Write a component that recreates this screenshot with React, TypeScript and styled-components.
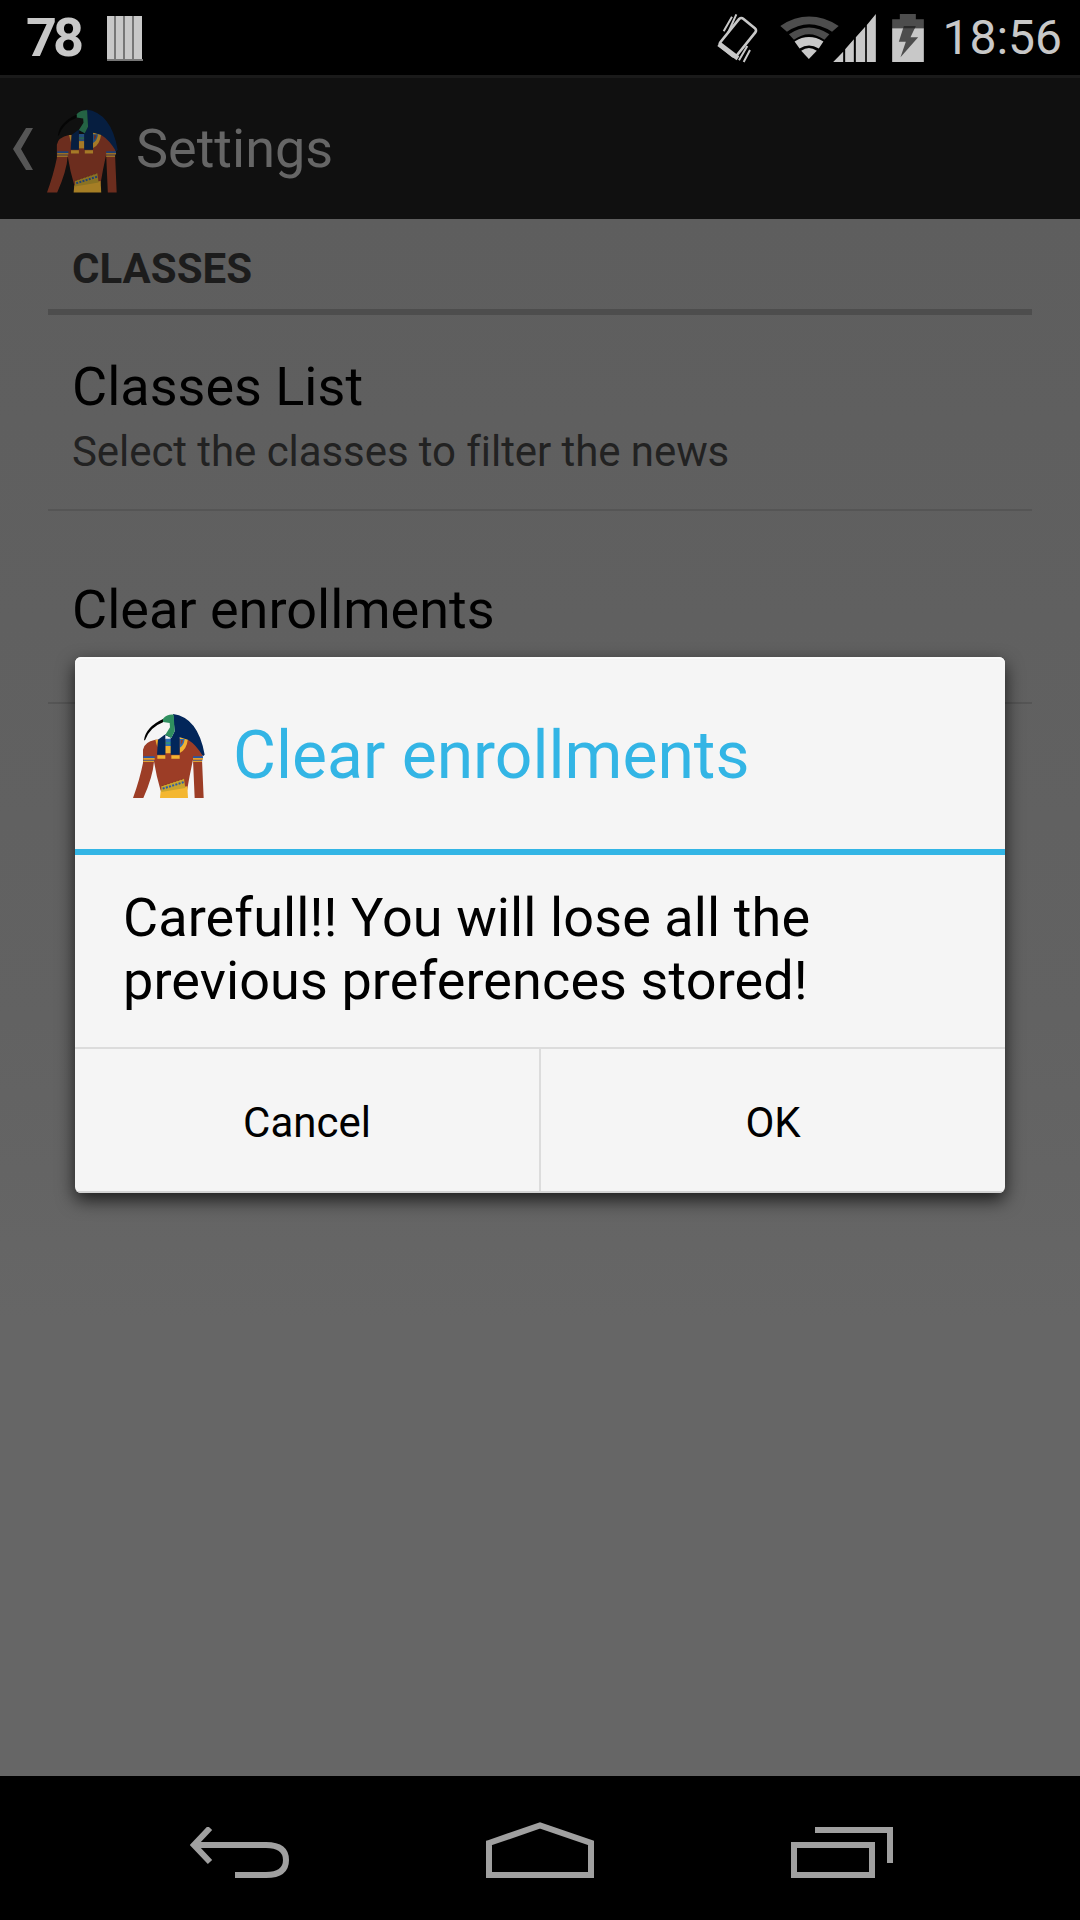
import React from 'react';
import styled, { createGlobalStyle } from 'styled-components';

const GlobalStyle = createGlobalStyle`
  html, body {
    margin: 0;
    padding: 0;
    background: #000;
  }
  * {
    box-sizing: border-box;
  }
`;

const Screen = styled.div`
  position: relative;
  width: 1080px;
  height: 1920px;
  display: flex;
  flex-direction: column;
  overflow: hidden;
  font-family: Roboto, "Noto Sans", sans-serif;
  background: #666;
`;

const StatusBar = styled.div`
  height: 75px;
  flex: none;
  background: #000;
  display: flex;
  align-items: center;
  padding: 0 18px 0 26px;
  color: #c8c8c8;
`;

const BatteryPercent = styled.span`
  font-size: 54px;
  font-weight: 700;
  letter-spacing: -4px;
  line-height: 75px;
`;

const Clock = styled.span`
  font-size: 48px;
  line-height: 75px;
  margin-left: 18px;
`;

const Spacer = styled.div`
  flex: 1;
`;

const StatusIcon = styled.svg<{ $left?: number }>`
  display: block;
  flex: none;
  margin-left: ${props => props.$left ?? 0}px;
`;

const ActionBar = styled.div`
  height: 144px;
  flex: none;
  background: #101010;
  border-top: 3px solid #1a1a1a;
  display: flex;
  align-items: center;
  padding-left: 13px;
`;

const BackChevron = styled.svg`
  display: block;
  flex: none;
  margin-right: 14px;
`;

const AppIcon = styled.svg<{ $dim?: boolean }>`
  display: block;
  flex: none;
  opacity: ${props => (props.$dim ? 0.66 : 1)};
  margin-top: ${props => (props.$dim ? 4 : 0)}px;
`;

const ActionTitle = styled.span`
  font-size: 54px;
  color: #666;
  margin-left: 18px;
`;

const Content = styled.div`
  flex: 1;
  padding: 0 48px;
  background: linear-gradient(#5e5e5e 0, #626262 800px, #666 1100px);
`;

const SectionHeader = styled.div`
  height: 96px;
  padding: 22px 0 0 24px;
  border-bottom: 6px solid #4d4d4d;
  font-size: 42px;
  font-weight: 700;
  line-height: 56px;
  color: #1c1c1c;
`;

const PrefRow = styled.div`
  min-height: 193px;
  display: flex;
  flex-direction: column;
  justify-content: center;
  padding: 36px 0 30px 24px;
  border-bottom: 2px solid #555;
`;

const PrefTitle = styled.div`
  font-size: 54px;
  line-height: 72px;
  color: #000;
`;

const PrefSummary = styled.div`
  position: relative;
  top: 1px;
  font-size: 42px;
  line-height: 56px;
  letter-spacing: -0.07px;
  color: #222;
`;

const NavBar = styled.div`
  height: 144px;
  flex: none;
  background: #000;
  display: flex;
  align-items: flex-end;
  gap: 197px;
  padding: 0 0 42px 190px;
`;

const NavIcon = styled.svg`
  display: block;
  flex: none;
  fill: none;
  stroke: #a0a0a0;
  stroke-width: 6;
`;

const Dialog = styled.div`
  position: absolute;
  left: 75px;
  top: 657px;
  width: 930px;
  height: 536px;
  display: flex;
  flex-direction: column;
  background: #f5f5f5;
  border-radius: 6px;
  box-shadow: 0 7px 18px rgba(0, 0, 0, 0.72), inset 0 2px 0 #fbfbfb;
  overflow: hidden;
`;

const DialogHeader = styled.div`
  height: 198px;
  flex: none;
  display: flex;
  align-items: center;
  padding: 5px 0 0 58px;
  border-bottom: 6px solid #33b5e5;
`;

const DialogTitle = styled.span`
  font-size: 66px;
  color: #33b5e5;
  margin-left: 28px;
`;

const DialogMessage = styled.div`
  flex: 1;
  padding: 31px 40px 0 48px;
  font-size: 54px;
  line-height: 63px;
  letter-spacing: 0.1px;
  color: #000;
`;

const ButtonRow = styled.div`
  height: 146px;
  flex: none;
  display: flex;
  border-top: 2px solid #dcdcdc;
  border-bottom: 2px solid #d4d4d4;
`;

const DialogButton = styled.div<{ $divider?: boolean }>`
  flex: 1;
  display: flex;
  align-items: center;
  justify-content: center;
  padding-top: 4px;
  font-size: 42px;
  color: #000;
  border-left: ${props => (props.$divider ? '2px solid #dcdcdc' : 'none')};
`;

const ThothIcon: React.FC<{ width: number; height: number; dim?: boolean }> = ({ width, height, dim }) => (
  <AppIcon $dim={dim} width={width} height={height} viewBox="25 25 216 255">
    <path
      fill="#9c3d26"
      d="M92 105Q58 112 55 135L55 175Q45 225 25 280L56 280Q85 215 88 170Q95 215 108 258L187 258Q195 210 205 165L210 280L237 280L232 165L235 140Q215 115 185 100Z"
    />
    <path fill="#f4b731" d="M108 258L188 245L190 280L106 280Z" />
    <path fill="#c9a52e" d="M110 245L178 222L182 250L110 262Z" />
    <path fill="none" stroke="#2a5ca8" strokeWidth="6" strokeDasharray="6 4" d="M114 252L178 232" />
    <path fill="none" stroke="#8a3a22" strokeWidth="3" strokeDasharray="5 5" d="M112 243L176 222" />
    <path fill="#f2b233" d="M92 105L100 105L98 128Z" />
    <path fill="#f2b233" d="M165 98L190 102Q186 135 165 145Z" />
    <path fill="#2f6fb5" d="M165 103L180 103Q178 122 165 130Z" />
    <path fill="#9c3d26" d="M168 106L175 106Q174 116 168 121Z" />
    <path fill="#2f6fb5" d="M122 102H140V112H122ZM122 118H140V124H122Z" />
    <path fill="#2f8f7f" d="M122 112H140V118H122Z" />
    <path fill="#f2b233" d="M122 124H140V146H122Z" />
    <path fill="#f2b233" d="M98 152H122V162H98ZM140 152H165V162H140Z" />
    <path fill="#2558a8" d="M56 155H90V160H56ZM205 155H235V160H205ZM56 165H89V168H56ZM205 165H233V168H205Z" />
    <path fill="#e0a030" d="M56 160H90V165H56ZM205 160H235V165H205ZM56 168H88V172H55ZM205 168H232V172H205Z" />
    <path
      fill="#02265a"
      d="M145 28Q220 38 240 150L235 155Q215 120 190 105L165 98L165 150L138 150L138 95L122 88L122 150L97 150L100 105L120 90L140 100L150 80Z"
    />
    <path fill="#2f8f5f" d="M115 42Q128 28 147 30L150 80L140 100L122 90L136 68L135 55L115 52Z" />
    <path fill="#000" d="M58 107Q62 68 115 43L115 53Q75 68 61 107Z" />
  </AppIcon>
);

export default function App() {
  return (
    <Screen>
      <GlobalStyle />
      <StatusBar>
        <BatteryPercent>78</BatteryPercent>
        <StatusIcon $left={27} width={36} height={46} viewBox="0 0 36 46">
          <path fill="#c8c8c8" d="M0 1H7V44H0ZM9 1H16V44H9ZM18 1H25V44H18ZM27 1H35V44H27Z" />
          <path fill="#777" d="M7 1H9V44H7ZM16 1H18V44H16ZM25 1H27V44H25ZM0 44H36V46H0Z" />
        </StatusIcon>
        <Spacer />
        {/* vibrate */}
        <StatusIcon width={45} height={52} viewBox="15 10 135 156">
          <g fill="none" stroke="#c8c8c8">
            <rect x="52" y="32.5" width="63" height="107" rx="9" strokeWidth="8" transform="rotate(39 83.5 86)" />
            <path strokeWidth="6" d="M41 68L66 24M54 73L79 17M87 155L112 112M101 160L120 124" />
          </g>
          <path fill="#c8c8c8" d="M22 112L80 155L88 143L32 100Z" />
        </StatusIcon>
        {/* wifi */}
        <StatusIcon $left={18} width={63} height={47} viewBox="205 15 190 140">
          <path fill="#4d4d4d" d="M212 50Q298 -6 388 50L368 68Q298 22 232 68Z" />
          <path fill="#4d4d4d" d="M238 75Q298 34 360 75L345 92Q298 58 253 92Z" />
          <path fill="#c8c8c8" d="M255 97Q298 70 342 97L328 118Q298 100 270 118Z" />
          <path fill="#c8c8c8" d="M275 125Q298 108 322 125L298 150Z" />
        </StatusIcon>
        {/* signal */}
        <StatusIcon $left={-8} width={43} height={48} viewBox="10 12 128 144">
          <path fill="#c8c8c8" d="M10 156L40 125V156ZM46 118L72 88V156H46ZM78 82L106 50V156H78ZM111 45L138 12V156H111Z" />
        </StatusIcon>
        {/* battery */}
        <StatusIcon $left={16} width={32} height={48} viewBox="187 12 95 144">
          <path fill="#4d4d4d" d="M210 12H258V28H282V55H187V28H210Z" />
          <path fill="#c8c8c8" d="M187 55H282V156H187Z" />
          <path fill="#4d4d4d" d="M222 48H258L242 82H265L212 142L228 95H207Z" />
          <path fill="#2a2a2a" d="M222 48H258L255 55H220Z" />
        </StatusIcon>
        <Clock>18:56</Clock>
      </StatusBar>

      <ActionBar>
        <BackChevron width={20} height={42} viewBox="0 0 20 42">
          <path fill="#555" d="M13 0H20L8 21L20 42H13L0 21Z" />
        </BackChevron>
        <ThothIcon width={71} height={85} dim />
        <ActionTitle>Settings</ActionTitle>
      </ActionBar>

      <Content>
        <SectionHeader>CLASSES</SectionHeader>
        <PrefRow>
          <PrefTitle>Classes List</PrefTitle>
          <PrefSummary>Select the classes to filter the news</PrefSummary>
        </PrefRow>
        <PrefRow>
          <PrefTitle>Clear enrollments</PrefTitle>
        </PrefRow>
      </Content>

      <NavBar>
        <NavIcon width={99} height={51} viewBox="0 0 99 51">
          <path d="M20 1L4 18L20 35" />
          <path d="M4 18H76Q96 18 96 33Q96 48 76 48H45" />
        </NavIcon>
        <NavIcon width={108} height={56} viewBox="0 0 108 56">
          <path d="M3 21L54 3.5L105 21V53H3Z" />
        </NavIcon>
        <NavIcon width={102} height={51} viewBox="0 0 102 51">
          <path d="M3 18H81V48H3Z" />
          <path d="M24 3H99V36" />
        </NavIcon>
      </NavBar>

      <Dialog>
        <DialogHeader>
          <ThothIcon width={72} height={85} />
          <DialogTitle>Clear enrollments</DialogTitle>
        </DialogHeader>
        <DialogMessage>
          Carefull!! You will lose all the
          <br />
          previous preferences stored!
        </DialogMessage>
        <ButtonRow>
          <DialogButton>Cancel</DialogButton>
          <DialogButton $divider>OK</DialogButton>
        </ButtonRow>
      </Dialog>
    </Screen>
  );
}
